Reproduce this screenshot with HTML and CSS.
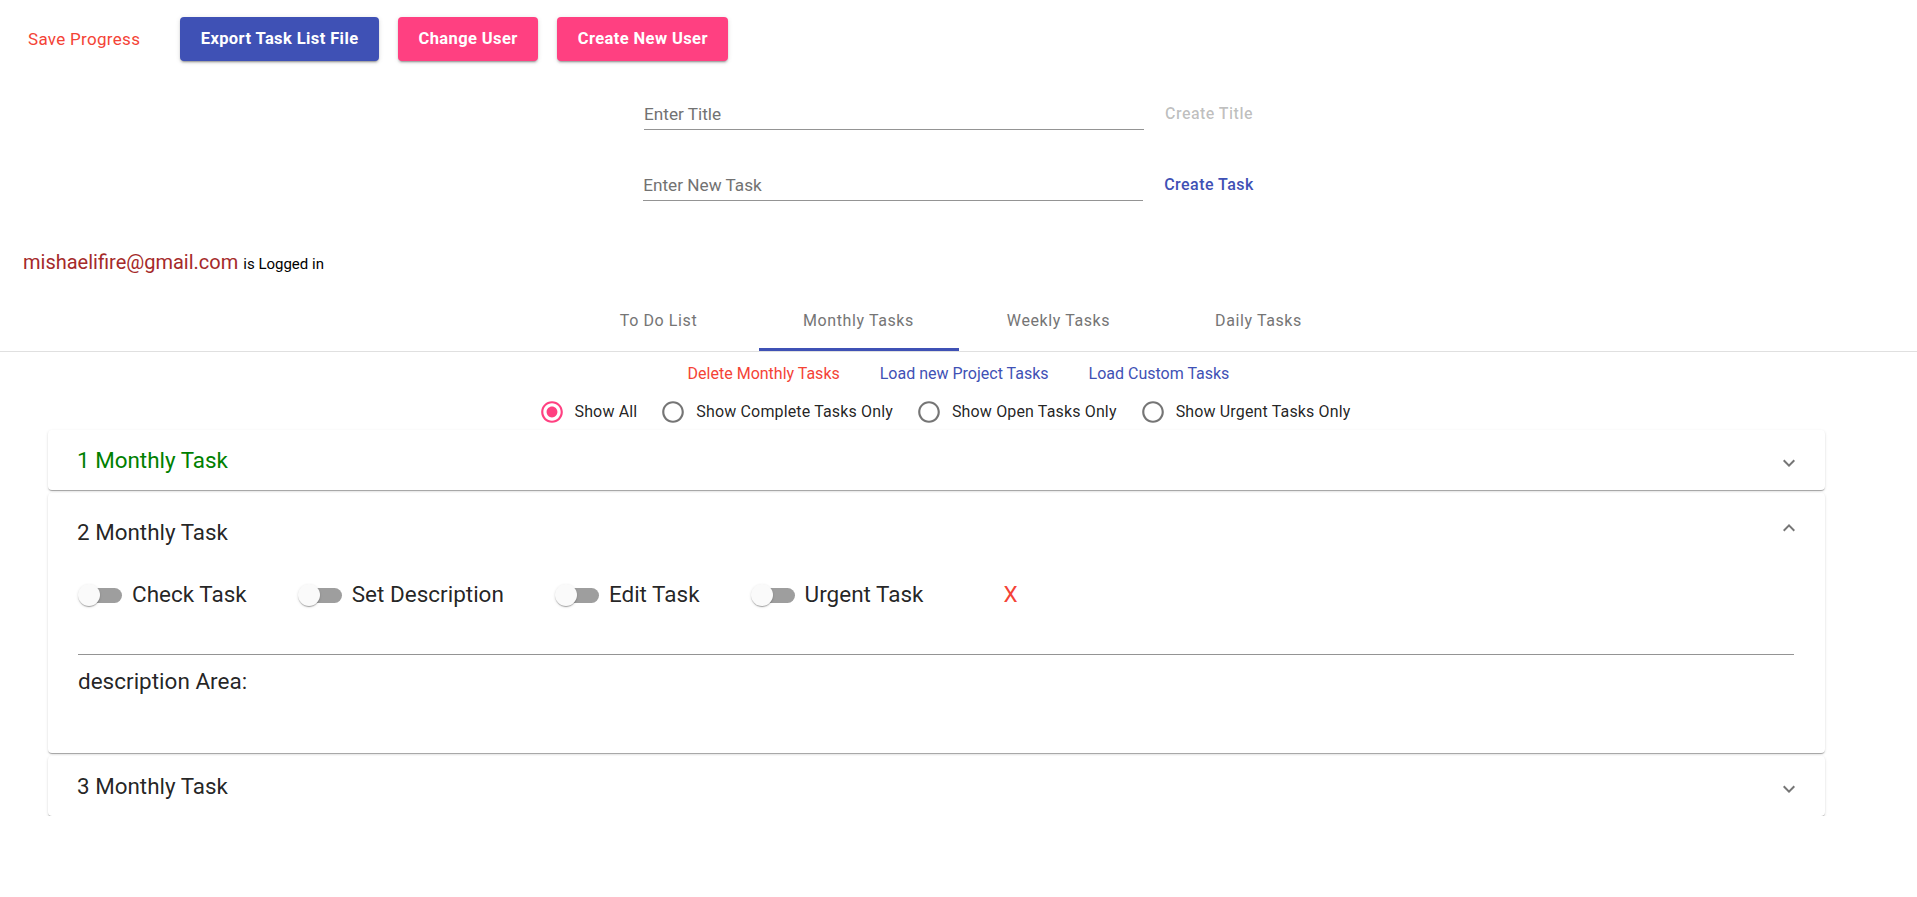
FILE: index.html
```html
<!DOCTYPE html>
<html lang="en">
<head>
<meta charset="utf-8">
<title>Task List</title>
<link rel="stylesheet" href="styles.css">
</head>
<body>
<div class="topbar">
  <button class="btn-text save">Save Progress</button>
  <button class="btn btn-primary">Export Task List File</button>
  <button class="btn btn-secondary">Change User</button>
  <button class="btn btn-secondary">Create New User</button>
</div>

<div class="form">
  <div class="form-row">
    <div class="field"><input class="input" placeholder="Enter Title"></div>
    <button class="btn-text disabled">Create Title</button>
  </div>
  <div class="form-row">
    <div class="field"><input class="input" placeholder="Enter New Task"></div>
    <button class="btn-text primary-text">Create Task</button>
  </div>
</div>

<div class="user"><span class="email">mishaelifire@gmail.com</span><span class="logged">is Logged in</span></div>

<div class="tabs">
  <div class="tab">To Do List</div>
  <div class="tab active">Monthly Tasks</div>
  <div class="tab">Weekly Tasks</div>
  <div class="tab">Daily Tasks</div>
</div>

<div class="actions">
  <span class="link red">Delete Monthly Tasks</span>
  <span class="link blue">Load new Project Tasks</span>
  <span class="link blue">Load Custom Tasks</span>
</div>

<div class="filters">
  <label class="radio-item">
    <svg class="radio checked" viewBox="0 0 24 24"><path d="M12 7c-2.76 0-5 2.24-5 5s2.24 5 5 5 5-2.24 5-5-2.24-5-5-5zm0-5C6.48 2 2 6.48 2 12s4.48 10 10 10 10-4.48 10-10S17.52 2 12 2zm0 18c-4.42 0-8-3.58-8-8s3.58-8 8-8 8 3.58 8 8-3.58 8-8 8z"/></svg>
    <span>Show All</span>
  </label>
  <label class="radio-item">
    <svg class="radio" viewBox="0 0 24 24"><path d="M12 2C6.48 2 2 6.48 2 12s4.48 10 10 10 10-4.48 10-10S17.52 2 12 2zm0 18c-4.42 0-8-3.58-8-8s3.58-8 8-8 8 3.58 8 8-3.58 8-8 8z"/></svg>
    <span>Show Complete Tasks Only</span>
  </label>
  <label class="radio-item">
    <svg class="radio" viewBox="0 0 24 24"><path d="M12 2C6.48 2 2 6.48 2 12s4.48 10 10 10 10-4.48 10-10S17.52 2 12 2zm0 18c-4.42 0-8-3.58-8-8s3.58-8 8-8 8 3.58 8 8-3.58 8-8 8z"/></svg>
    <span>Show Open Tasks Only</span>
  </label>
  <label class="radio-item">
    <svg class="radio" viewBox="0 0 24 24"><path d="M12 2C6.48 2 2 6.48 2 12s4.48 10 10 10 10-4.48 10-10S17.52 2 12 2zm0 18c-4.42 0-8-3.58-8-8s3.58-8 8-8 8 3.58 8 8-3.58 8-8 8z"/></svg>
    <span>Show Urgent Tasks Only</span>
  </label>
</div>

<div class="panels">
  <div class="panel">
    <div class="summary">
      <span class="title done">1 Monthly Task</span>
      <svg class="chev" viewBox="0 0 24 24"><path d="M16.59 8.59L12 13.17 7.41 8.59 6 10l6 6 6-6z"/></svg>
    </div>
  </div>

  <div class="panel">
    <div class="summary expanded">
      <span class="title">2 Monthly Task</span>
      <svg class="chev" viewBox="0 0 24 24"><path d="M12 8l-6 6 1.41 1.41L12 10.83l4.59 4.58L18 14z"/></svg>
    </div>
    <div class="details">
      <div class="toggles">
        <div class="toggle"><span class="switch"><span class="track"></span><span class="thumb"></span></span><span class="toggle-label">Check Task</span></div>
        <div class="toggle"><span class="switch"><span class="track"></span><span class="thumb"></span></span><span class="toggle-label">Set Description</span></div>
        <div class="toggle"><span class="switch"><span class="track"></span><span class="thumb"></span></span><span class="toggle-label">Edit Task</span></div>
        <div class="toggle"><span class="switch"><span class="track"></span><span class="thumb"></span></span><span class="toggle-label">Urgent Task</span></div>
        <span class="remove">X</span>
      </div>
      <div class="divider"></div>
      <div class="description">description Area:</div>
    </div>
  </div>

  <div class="panel">
    <div class="summary">
      <span class="title">3 Monthly Task</span>
      <svg class="chev" viewBox="0 0 24 24"><path d="M16.59 8.59L12 13.17 7.41 8.59 6 10l6 6 6-6z"/></svg>
    </div>
  </div>
</div>
</body>
</html>
```

FILE: styles.css
```css
* { box-sizing: border-box; }

body {
  margin: 0;
  background: #fff;
  color: rgba(0, 0, 0, 0.87);
  font-family: Roboto, "Noto Sans", "Liberation Sans", sans-serif;
}

button { font-family: inherit; cursor: pointer; }

/* ---------- top bar ---------- */
.topbar {
  display: flex;
  align-items: center;
  gap: 19px;
  padding: 17px 0 0 12px;
}

.btn {
  height: 44px;
  padding: 0 20.5px;
  border: none;
  border-radius: 4px;
  color: #fff;
  font-size: 16.5px;
  font-weight: 700;
  line-height: 20px;
  letter-spacing: 0.4px;
  box-shadow: 0 3px 1px -2px rgba(0,0,0,0.2), 0 2px 2px 0 rgba(0,0,0,0.14), 0 1px 5px 0 rgba(0,0,0,0.12);
}
.btn-primary { background: #3f51b5; }
.btn-secondary { background: #ff4081; }

.btn-text {
  background: none;
  border: none;
  padding: 6px 8px;
  font-size: 16px;
  font-weight: 500;
  line-height: 20px;
  letter-spacing: 0.457px;
}
.save {
  color: #f44336;
  padding: 0 16px;
  margin-right: 5px;
  font-size: 17px;
  font-weight: 400;
  letter-spacing: 0.3px;
}
.disabled { color: rgba(0, 0, 0, 0.26); cursor: default; }
.primary-text { color: #3f51b5; }

/* ---------- form ---------- */
.form {
  display: flex;
  flex-direction: column;
  align-items: center;
  gap: 39px;
  margin-top: 37px;
  padding-right: 12px;
}
.form-row {
  display: flex;
  align-items: center;
  gap: 13px;
}
.field {
  width: 500px;
  border-bottom: 1px solid rgba(0, 0, 0, 0.42);
}
.input {
  display: block;
  width: 100%;
  border: none;
  outline: none;
  padding: 6px 0 5px;
  font-family: inherit;
  font-size: 17.2px;
  line-height: 20px;
  height: 31px;
  color: rgba(0, 0, 0, 0.87);
  background: transparent;
}
.input::placeholder { color: #727272; opacity: 1; }

/* ---------- user ---------- */
.user {
  display: flex;
  align-items: baseline;
  gap: 5px;
  height: 24px;
  margin-top: 49px;
  padding-left: 23px;
  line-height: 24px;
}
.email { font-size: 20px; color: #a52a2a; }
.logged { font-size: 15px; color: #000; }

/* ---------- tabs ---------- */
.tabs {
  display: flex;
  justify-content: center;
  margin-top: 29px;
  border-bottom: 1px solid #e0e0e0;
}
.tab {
  position: relative;
  width: 200px;
  height: 48px;
  padding-top: 6px;
  text-align: center;
  font-size: 16px;
  line-height: 24px;
  letter-spacing: 0.6px;
  color: #757575;
}
.tab.active::after {
  content: "";
  position: absolute;
  left: 0;
  right: 0;
  bottom: 0;
  height: 3px;
  background: #3f51b5;
}

/* ---------- actions ---------- */
.actions {
  display: flex;
  justify-content: center;
  gap: 40px;
  margin-top: 11px;
  font-size: 16px;
  line-height: 22px;
}
.link.red { color: #f44336; }
.link.blue { color: #3f51b5; }

/* ---------- filters ---------- */
.filters {
  display: flex;
  justify-content: center;
  align-items: center;
  margin-top: 14px;
  padding-right: 21px;
  font-size: 16px;
  line-height: 24px;
  letter-spacing: 0.15px;
  color: rgba(0, 0, 0, 0.87);
}
.radio-item {
  display: flex;
  align-items: center;
  margin-right: 15px;
}
.radio {
  width: 26px;
  height: 26px;
  margin: 0 10px 0 8px;
  fill: rgba(0, 0, 0, 0.54);
  flex: none;
}
.radio.checked { fill: #ff4081; }

/* ---------- panels ---------- */
.panels {
  display: flex;
  flex-direction: column;
  gap: 3px;
  margin: 5px 92px 0 48px;
}
.panel {
  background: #fff;
  border-radius: 4px;
  box-shadow: 0 2px 1px -1px rgba(0,0,0,0.2), 0 1px 1px 0 rgba(0,0,0,0.14), 0 1px 3px 0 rgba(0,0,0,0.12);
}
.summary {
  display: flex;
  align-items: center;
  justify-content: space-between;
  height: 60px;
  padding: 0 24px 0 29px;
}
.summary.expanded { height: 80px; padding-bottom: 2px; }
.title {
  font-size: 22.4px;
  line-height: 26px;
  color: rgba(0, 0, 0, 0.87);
}
.title.done { color: #008000; }
.chev {
  width: 24px;
  height: 24px;
  margin-top: 6px;
  fill: rgba(0, 0, 0, 0.54);
}
.summary.expanded .chev { margin-top: 0; margin-bottom: 8px; }

.details {
  padding: 0 31px 59px 30px;
}
.toggles {
  display: flex;
  align-items: center;
  height: 44px;
}
.toggle {
  display: flex;
  align-items: center;
  margin-right: 51px;
}
.switch {
  position: relative;
  width: 44px;
  height: 24px;
  flex: none;
}
.track {
  position: absolute;
  left: 2px;
  top: 5px;
  width: 42px;
  height: 15px;
  border-radius: 8px;
  background: #9e9e9e;
}
.thumb {
  position: absolute;
  left: 0;
  top: 1px;
  width: 22px;
  height: 22px;
  border-radius: 50%;
  background: #fafafa;
  box-shadow: 0 2px 1px -1px rgba(0,0,0,0.2), 0 1px 1px 0 rgba(0,0,0,0.14), 0 1px 3px 0 rgba(0,0,0,0.12);
}
.toggle-label {
  margin-left: 10px;
  padding-bottom: 3px;
  font-size: 22.5px;
  line-height: 26px;
}
.remove {
  margin-left: 29px;
  padding-bottom: 3px;
  font-size: 22.5px;
  line-height: 26px;
  color: #f44336;
}
.divider {
  margin-top: 37px;
  height: 1px;
  background: #949494;
}
.description {
  margin-top: 13px;
  font-size: 22.5px;
  line-height: 26px;
}
```
